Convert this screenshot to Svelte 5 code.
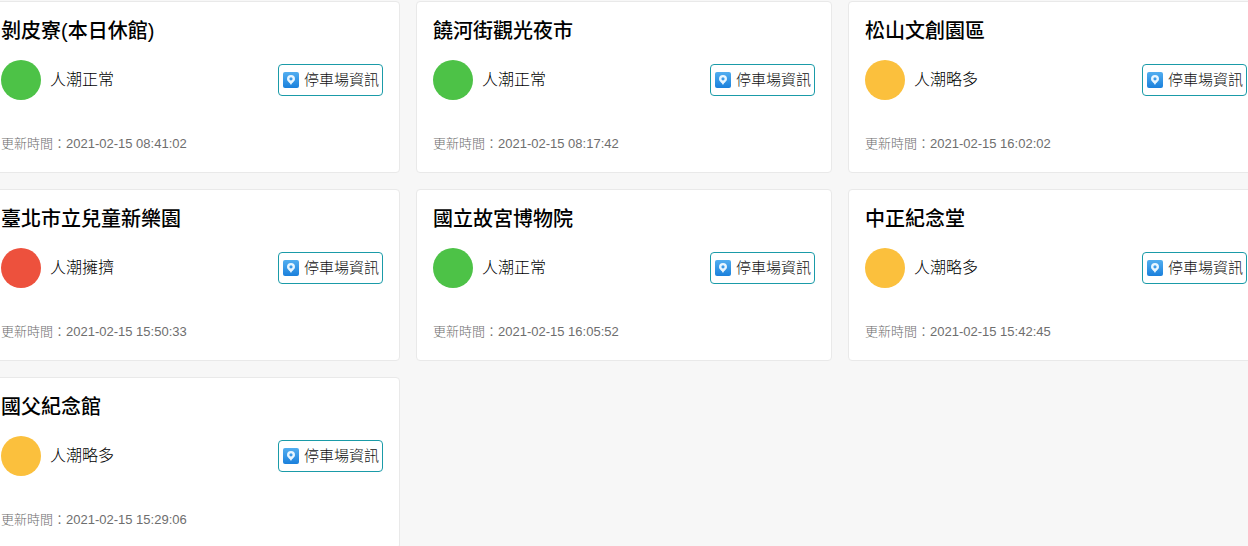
<script>
    const places = [
        { name: '剝皮寮(本日休館)', status: 'normal', updated: '2021-02-15 08:41:02' },
        { name: '饒河街觀光夜市', status: 'normal', updated: '2021-02-15 08:17:42' },
        { name: '松山文創園區', status: 'busy', updated: '2021-02-15 16:02:02' },
        { name: '臺北市立兒童新樂園', status: 'crowded', updated: '2021-02-15 15:50:33' },
        { name: '國立故宮博物院', status: 'normal', updated: '2021-02-15 16:05:52' },
        { name: '中正紀念堂', status: 'busy', updated: '2021-02-15 15:42:45' },
        { name: '國父紀念館', status: 'busy', updated: '2021-02-15 15:29:06' }
    ];

    const labels = {
        normal: '人潮正常',
        busy: '人潮略多',
        crowded: '人潮擁擠'
    };
</script>

<svg class="defs" width="0" height="0" aria-hidden="true">
    <linearGradient id="pin-bg" x1="0" y1="0" x2="0" y2="1">
        <stop offset="0" stop-color="#52aef0" />
        <stop offset="1" stop-color="#1a80dc" />
    </linearGradient>
</svg>

<main>
    <div class="grid">
        {#each places as place}
            <article class="card">
                <h2>{place.name}</h2>
                <div class="row">
                    <span class="dot {place.status}"></span>
                    <span class="label">{labels[place.status]}</span>
                    <button type="button" class="parking">
                        <svg width="16" height="16" viewBox="0 0 16 16" aria-hidden="true">
                            <rect width="16" height="16" rx="2" fill="url(#pin-bg)" />
                            <path fill="#e8f6ff" fill-rule="evenodd" d="M8 3a4 4 0 0 0-4 4C4 9.500 7 10.500 8 13C9 10.500 12 9.500 12 7A4 4 0 0 0 8 3zM8 5.200a1.600 1.600 0 1 1 0 3.200a1.600 1.600 0 0 1 0-3.200z" />
                        </svg>
                        <span>停車場資訊</span>
                    </button>
                </div>
                <p class="time">更新時間：{place.updated}</p>
            </article>
        {/each}
    </div>
</main>

<style>
    :global(body) {
        background-color: #f7f7f7;
        overflow: hidden;
        font-family: "Liberation Sans", "Noto Sans CJK TC", sans-serif;
    }

    .defs {
        position: absolute;
    }

    .grid {
        display: grid;
        grid-template-columns: repeat(3, 1fr);
        gap: 16px;
        margin: 0 -16px;
        padding-top: 1px;
    }

    .card {
        background-color: #fff;
        border: 1px solid #e9e9e9;
        border-radius: 4px;
        padding: 16px;
    }

    h2 {
        margin: 0 0 16px;
        font-size: 20px;
        font-weight: 500;
        line-height: 26px;
        color: #000;
    }

    .row {
        display: flex;
        align-items: center;
        height: 40px;
    }

    .dot {
        width: 40px;
        height: 40px;
        border-radius: 50%;
        flex: none;
    }

    .normal {
        background-color: #4dc247;
    }

    .busy {
        background-color: #fbc03d;
    }

    .crowded {
        background-color: #ed513d;
    }

    .label {
        margin-left: 9px;
        font-size: 16px;
        font-weight: 300;
        line-height: 24px;
        color: #000;
    }

    .parking {
        display: flex;
        align-items: center;
        gap: 5px;
        height: 32px;
        margin-left: auto;
        padding: 0 3px 0 4px;
        background-color: #fff;
        border: 1px solid #1a9ba8;
        border-radius: 4px;
        font-family: inherit;
        font-size: 15px;
        font-weight: 300;
        line-height: 20px;
        color: #111;
        cursor: pointer;
    }

    .time {
        margin: 32px 0 0;
        font-size: 13px;
        font-weight: 300;
        line-height: 24px;
        color: #6e6e6e;
    }
</style>
